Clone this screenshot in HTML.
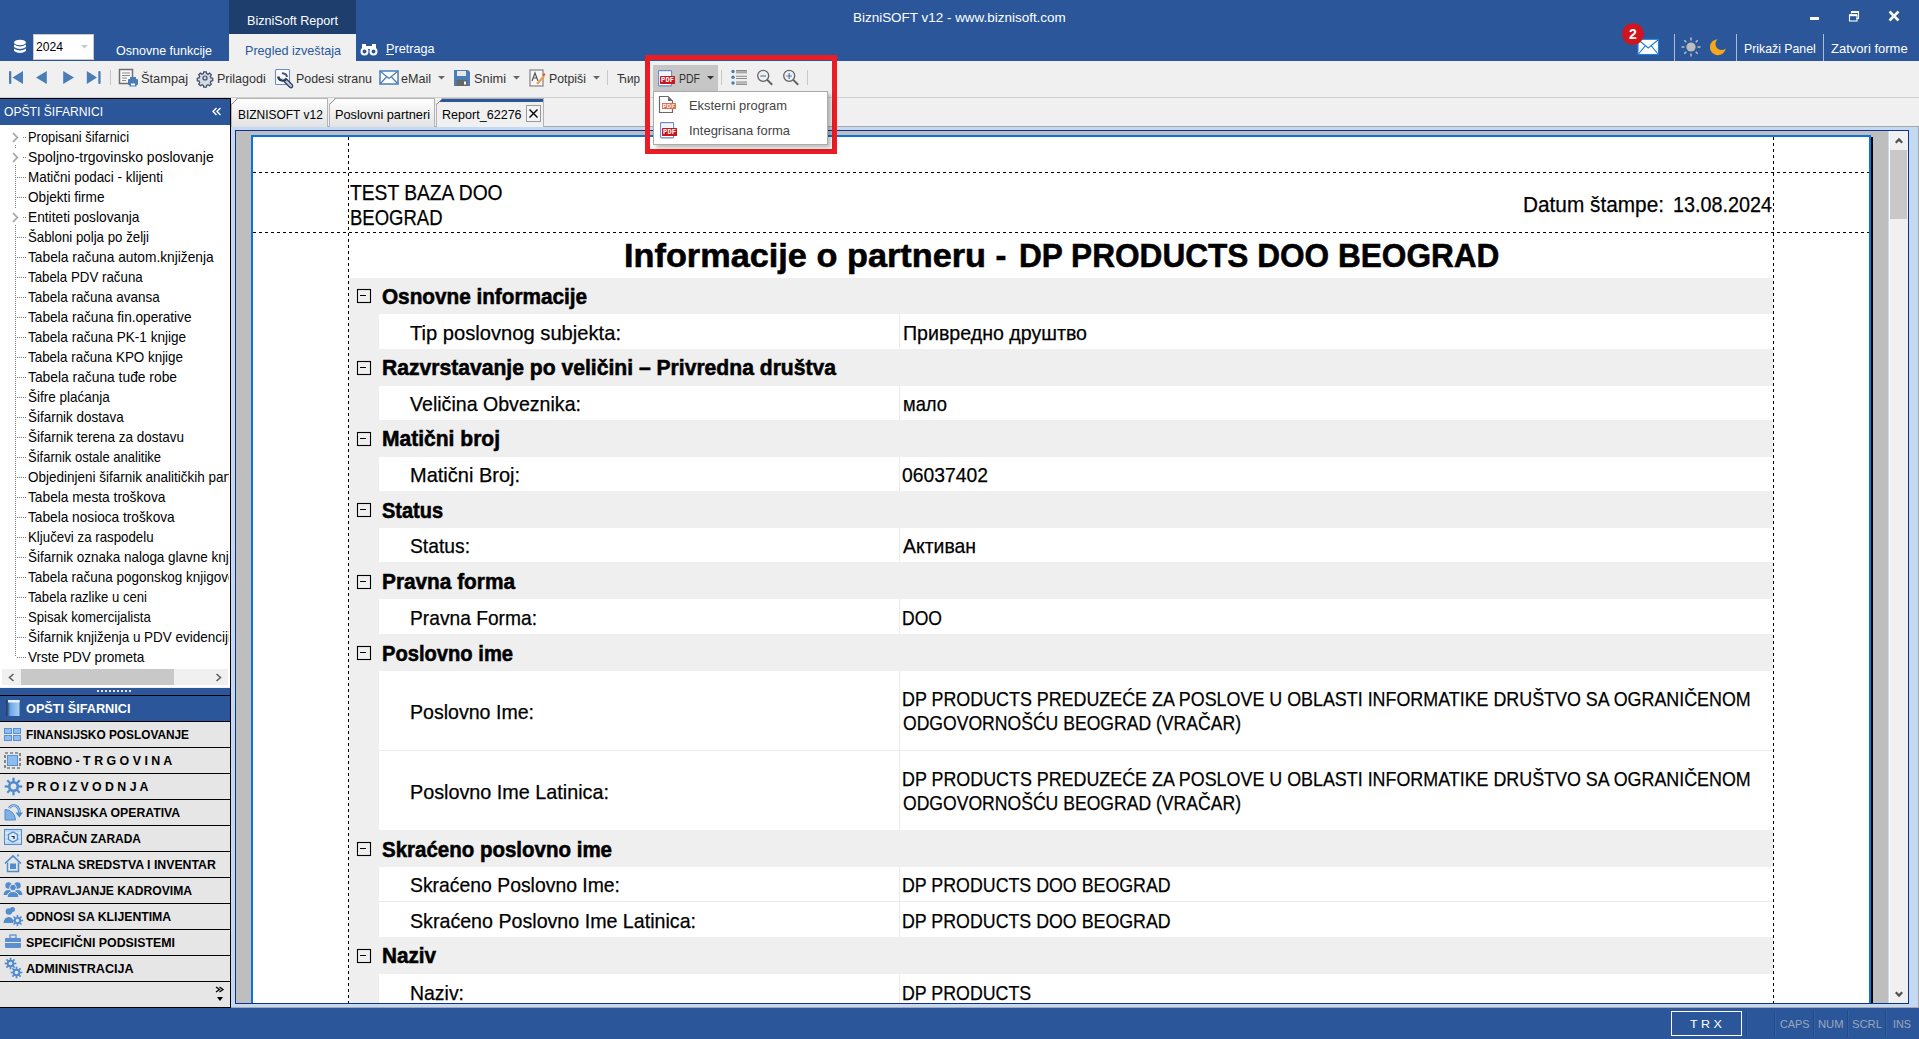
<!DOCTYPE html>
<html><head><meta charset="utf-8"><style>
html,body{margin:0;padding:0;width:1919px;height:1039px;overflow:hidden;background:#F0F0F0;font-family:"Liberation Sans",sans-serif;}
.a{position:absolute;box-sizing:border-box;}
.t{position:absolute;white-space:nowrap;font-family:"Liberation Sans",sans-serif;}
svg.a{overflow:visible}
</style></head><body>
<div class="a" style="left:0px;top:0px;width:1919px;height:61px;background:#2B579A;"></div>
<div class="a" style="left:229px;top:0px;width:127px;height:34px;background:#1E3E6D;"></div>
<div class="a" style="left:229px;top:34px;width:127px;height:27px;background:#F0F0F0;"></div>
<svg class="a" style="left:13px;top:39px;" width="14" height="16" viewBox="0 0 14 16"><g fill="#fff"><ellipse cx="7" cy="3.5" rx="6" ry="2.8"/><path d="M1 5.5 Q7 9.5 13 5.5 V8 Q7 12 1 8Z"/><path d="M1 9.5 Q7 13.5 13 9.5 V12 Q7 16 1 12Z"/></g></svg>
<div class="a" style="left:33px;top:34px;width:61px;height:26px;background:#FFFFFF;border:1px solid #C9C9C9;"></div>
<div class="t" style="left:36.00px;top:41.00px;font-size:12.5px;line-height:12.5px;color:#000;transform:scaleX(0.9710);transform-origin:0 0;">2024</div>
<svg class="a" style="left:81px;top:45px;" width="7" height="4" viewBox="0 0 7 4"><path d="M0 0H7L3.5 3.5Z" fill="#C8C8C8"/></svg>
<div class="t" style="left:115.50px;top:45.00px;font-size:12.7px;line-height:12.7px;color:#FFFFFF;transform:scaleX(0.9864);transform-origin:0 0;">Osnovne funkcije</div>
<div class="t" style="left:247.40px;top:15.00px;font-size:12.7px;line-height:12.7px;color:#FFFFFF;transform:scaleX(0.9926);transform-origin:0 0;">BizniSoft Report</div>
<div class="t" style="left:244.50px;top:45.00px;font-size:12.7px;line-height:12.7px;color:#2B579A;transform:scaleX(0.9936);transform-origin:0 0;">Pregled izveštaja</div>
<svg class="a" style="left:360px;top:43px;" width="18" height="13" viewBox="0 0 18 13"><g fill="#fff"><path d="M2 1h4v5H2z M12 1h4v5h-4z"/><path d="M6 3h6v3H6z"/></g><g fill="none" stroke="#fff" stroke-width="2"><circle cx="4.5" cy="8.5" r="3"/><circle cx="13.5" cy="8.5" r="3"/></g></svg>
<div class="t" style="left:385.50px;top:43.00px;font-size:12.7px;line-height:12.7px;color:#FFFFFF;transform:scaleX(0.9967);transform-origin:0 0;">Pretraga</div>
<div class="a" style="left:386px;top:54px;width:8px;height:1px;background:#FFFFFF;"></div>
<div class="t" style="left:852.50px;top:11.00px;font-size:13.45px;line-height:13.45px;color:#FFFFFF;transform:scaleX(1.0009);transform-origin:0 0;">BizniSOFT v12 - www.biznisoft.com</div>
<div class="a" style="left:1810px;top:17px;width:9px;height:3px;background:#FFFFFF;"></div>
<svg class="a" style="left:1848px;top:10px;" width="12" height="12" viewBox="0 0 12 12"><g fill="none" stroke="#fff"><path d="M3.5 3.5V1.5H10.5V8.5H8.5" stroke-width="1.1"/><rect x="1.5" y="5" width="7.5" height="6" stroke-width="1.1"/><path d="M1.5 5.2H9" stroke-width="2"/><path d="M3.5 2.2H10.5" stroke-width="1.6"/></g></svg>
<svg class="a" style="left:1888px;top:10px;" width="12" height="12" viewBox="0 0 12 12"><path d="M1.5 1.5L10.5 10.5M10.5 1.5L1.5 10.5" stroke="#fff" stroke-width="2.5"/></svg>
<svg class="a" style="left:1637px;top:38px;" width="23" height="18" viewBox="0 0 23 18"><rect x="1" y="1.3" width="20.5" height="15.2" fill="#FFFFFF" stroke="#1E7FD8" stroke-width="1.1"/><path d="M1.5 2L11.2 10L21 2M1.5 16L8.2 7.8M21 16L14.3 7.8" fill="none" stroke="#1E7FD8" stroke-width="1.1"/></svg>
<svg class="a" style="left:1622px;top:23px;" width="22" height="22" viewBox="0 0 22 22"><circle cx="11" cy="11" r="10.8" fill="#D2141E"/><text x="11" y="16" text-anchor="middle" font-family="Liberation Sans" font-weight="bold" font-size="14" fill="#fff">2</text></svg>
<div class="a" style="left:1674px;top:34px;width:1px;height:27px;background:#A9BCD9;"></div>
<div class="a" style="left:1736px;top:34px;width:1px;height:27px;background:#A9BCD9;"></div>
<div class="a" style="left:1823px;top:34px;width:1px;height:27px;background:#A9BCD9;"></div>
<svg class="a" style="left:1681px;top:37px;" width="20" height="20" viewBox="0 0 20 20"><circle cx="10" cy="10" r="4.6" fill="#BDBDBD"/><g stroke="#BDBDBD" stroke-width="1.5"><path d="M10 0.5V3.5M10 16.5V19.5M0.5 10H3.5M16.5 10H19.5M3.3 3.3L5.3 5.3M14.7 14.7L16.7 16.7M3.3 16.7L5.3 14.7M14.7 5.3L16.7 3.3"/></g></svg>
<svg class="a" style="left:1709px;top:38px;" width="18" height="18" viewBox="0 0 18 18"><path d="M8.5 1.2 A8 8 0 1 0 16.8 10.5 A5.8 5.8 0 0 1 8.5 1.2Z" fill="#F5A81C"/></svg>
<div class="t" style="left:1744.00px;top:43.00px;font-size:12.7px;line-height:12.7px;color:#FFFFFF;transform:scaleX(0.9684);transform-origin:0 0;">Prikaži Panel</div>
<div class="t" style="left:1831.00px;top:43.00px;font-size:12.7px;line-height:12.7px;color:#FFFFFF;transform:scaleX(1.0263);transform-origin:0 0;">Zatvori forme</div>
<div class="a" style="left:0px;top:61px;width:1919px;height:37px;background:#F0F0F0;"></div>
<div class="a" style="left:0px;top:97px;width:1919px;height:1px;background:#CFCFCF;"></div>
<svg class="a" style="left:8px;top:70px;" width="16" height="15" viewBox="0 0 16 15"><rect x="1" y="1" width="2.3" height="13" rx="1" fill="#4A7DB5"/><path d="M4.5 7.5L15 1V14Z" fill="#4A7DB5"/></svg>
<svg class="a" style="left:35px;top:70px;" width="13" height="15" viewBox="0 0 13 15"><path d="M1 7.5L11.8 1V14Z" fill="#4A7DB5"/></svg>
<svg class="a" style="left:62px;top:70px;" width="13" height="15" viewBox="0 0 13 15"><path d="M12 7.5L1.2 1V14Z" fill="#4A7DB5"/></svg>
<svg class="a" style="left:86px;top:70px;" width="16" height="15" viewBox="0 0 16 15"><rect x="12.3" y="1" width="2.3" height="13" rx="1" fill="#4A7DB5"/><path d="M11 7.5L0.8 1V14Z" fill="#4A7DB5"/></svg>
<div class="a" style="left:110px;top:70px;width:1px;height:15px;background:#C8C8C8;"></div>
<svg class="a" style="left:118px;top:68px;" width="21" height="20" viewBox="0 0 21 20"><rect x="1.5" y="1.5" width="13" height="14" fill="#F8F8F8" stroke="#707070" stroke-width="1.5"/><path d="M4 5H12M4 7.5H12M4 10H9M4 12.5H8" stroke="#8A8A8A" stroke-width="1.2"/><g fill="#4A7DB5"><rect x="10" y="11" width="10" height="6" rx="1"/><rect x="12" y="9" width="6" height="3"/><rect x="11.5" y="15" width="7" height="3.5"/></g><rect x="13" y="15.5" width="4" height="2" fill="#fff"/></svg>
<div class="t" style="left:140.60px;top:73.00px;font-size:12.7px;line-height:12.7px;color:#333333;transform:scaleX(1.0098);transform-origin:0 0;">Štampaj</div>
<svg class="a" style="left:196px;top:69px;" width="18" height="18" viewBox="0 0 18 18"><g transform="translate(9 9) scale(0.78)"><path d="M-1.6 -8h3.2l.5 2.3 1.8.8 2-1.3 2.2 2.2-1.3 2 .8 1.8 2.3.5v3.2l-2.3.5-.8 1.8 1.3 2-2.2 2.2-2-1.3-1.8.8-.5 2.3h-3.2l-.5-2.3-1.8-.8-2 1.3-2.2-2.2 1.3-2-.8-1.8-2.3-.5v-3.2l2.3-.5.8-1.8-1.3-2 2.2-2.2 2 1.3 1.8-.8z" fill="#D5DCE6" stroke="#3E4C6A" stroke-width="1.6"/><circle r="2.6" fill="none" stroke="#3E4C6A" stroke-width="1.5"/></g></svg>
<div class="t" style="left:216.60px;top:73.00px;font-size:12.7px;line-height:12.7px;color:#333333;transform:scaleX(0.9885);transform-origin:0 0;">Prilagodi</div>
<svg class="a" style="left:272px;top:66px;" width="24" height="24" viewBox="0 0 24 24"><rect x="3.5" y="3.5" width="14" height="15" rx="1" fill="#FAFCFF" stroke="#7389C6" stroke-width="1.1"/><path d="M13.5 14.5L19 20" stroke="#2F3A55" stroke-width="4.6" stroke-linecap="round"/><path d="M13.5 14.5L19 20" stroke="#B9CCEA" stroke-width="2.2" stroke-linecap="round"/><path d="M6.2 10.5 A4.6 4.6 0 0 0 14.6 12.5" fill="none" stroke="#2F3A55" stroke-width="2.3"/><path d="M10 7 L11.5 7.5 A4 4 0 0 1 15 11" fill="none" stroke="#4A5878" stroke-width="2"/><path d="M9 11.5 A2.5 2.5 0 0 0 13 12" fill="none" stroke="#C8D6EE" stroke-width="1.4"/></svg>
<div class="t" style="left:295.70px;top:73.00px;font-size:12.7px;line-height:12.7px;color:#333333;transform:scaleX(0.9796);transform-origin:0 0;">Podesi stranu</div>
<svg class="a" style="left:379px;top:70px;" width="20" height="15" viewBox="0 0 20 15"><rect x="1" y="1" width="18" height="13" fill="#fff" stroke="#4A7DB5" stroke-width="1.5"/><path d="M1 1L10 8.5L19 1M1 14L7.5 7M19 14L12.5 7" fill="none" stroke="#4A7DB5" stroke-width="1.2"/></svg>
<div class="t" style="left:401.00px;top:73.00px;font-size:12.7px;line-height:12.7px;color:#333333;transform:scaleX(0.9895);transform-origin:0 0;">eMail</div>
<svg class="a" style="left:438px;top:76px;" width="7" height="4" viewBox="0 0 7 4"><path d="M0 0H7L3.5 3.5Z" fill="#666"/></svg>
<svg class="a" style="left:453px;top:69px;" width="18" height="18" viewBox="0 0 18 18"><path d="M1 1H15L17 3V17H1Z" fill="#4A7DB5"/><rect x="4" y="2" width="9" height="5" fill="#E8E8E8"/><rect x="3.5" y="11" width="11" height="6" fill="#666"/><rect x="11" y="12.5" width="2" height="3" fill="#fff"/></svg>
<div class="t" style="left:474.00px;top:73.00px;font-size:12.7px;line-height:12.7px;color:#333333;transform:scaleX(1.0087);transform-origin:0 0;">Snimi</div>
<svg class="a" style="left:513px;top:76px;" width="7" height="4" viewBox="0 0 7 4"><path d="M0 0H7L3.5 3.5Z" fill="#666"/></svg>
<svg class="a" style="left:529px;top:69px;" width="17" height="18" viewBox="0 0 17 18"><rect x="1" y="1" width="13" height="16" fill="#F8F8F8" stroke="#8A8A8A" stroke-width="1.3"/><path d="M3 12L6 4L9 12M4.2 9H7.8" fill="none" stroke="#555" stroke-width="1.2"/><path d="M8 15L15 7" stroke="#F0A050" stroke-width="2.2"/><path d="M14 6.5L16 5" stroke="#E05030" stroke-width="2"/></svg>
<div class="t" style="left:549.00px;top:73.00px;font-size:12.7px;line-height:12.7px;color:#333333;transform:scaleX(0.9716);transform-origin:0 0;">Potpiši</div>
<svg class="a" style="left:593px;top:76px;" width="7" height="4" viewBox="0 0 7 4"><path d="M0 0H7L3.5 3.5Z" fill="#666"/></svg>
<div class="a" style="left:607px;top:70px;width:1px;height:15px;background:#C8C8C8;"></div>
<div class="t" style="left:617.00px;top:73.00px;font-size:12.7px;line-height:12.7px;color:#333333;transform:scaleX(0.9208);transform-origin:0 0;">Ћир</div>
<div class="a" style="left:653px;top:65px;width:65px;height:26px;background:#C6C6C6;"></div>
<svg class="a" style="left:658px;top:70px;" width="18" height="17" viewBox="0 0 18 17"><rect x="0.6" y="0.6" width="13" height="15.3" rx="0.8" fill="#FFFFFF" stroke="#6F87C4" stroke-width="1.1"/><rect x="2.2" y="2.5" width="9.5" height="3" fill="#EEF1FA"/><rect x="2" y="6" width="15" height="8" rx="0.5" fill="#C8161E"/><text x="9.6" y="12.4" text-anchor="middle" font-family="Liberation Mono" font-weight="bold" font-size="7" fill="#fff" letter-spacing="0.2">PDF</text></svg>
<div class="t" style="left:679.00px;top:73.00px;font-size:12.7px;line-height:12.7px;color:#333333;transform:scaleX(0.8276);transform-origin:0 0;">PDF</div>
<svg class="a" style="left:707px;top:76px;" width="7" height="4" viewBox="0 0 7 4"><path d="M0 0H7L3.5 3.5Z" fill="#333"/></svg>
<div class="a" style="left:721px;top:70px;width:1px;height:15px;background:#C8C8C8;"></div>
<svg class="a" style="left:730px;top:69px;" width="18" height="17" viewBox="0 0 18 17"><g fill="#4A7DB5"><circle cx="3" cy="2.5" r="1.7"/><circle cx="3" cy="8.3" r="1.7"/><circle cx="3" cy="14" r="1.7"/></g><g stroke="#7A7A7A" stroke-width="0.9"><path d="M6 1.5H17M6 3.8H17M6 7.3H17M6 9.5H17M6 13H17M6 15.4H17"/></g><g stroke="#B0B0B0" stroke-width="1.2"><path d="M6 2.7H17M6 14.2H17"/></g></svg>
<svg class="a" style="left:756px;top:69px;" width="18" height="18" viewBox="0 0 18 18"><circle cx="7.2" cy="6.8" r="5.5" fill="none" stroke="#636363" stroke-width="1.3"/><path d="M11 10.6L16.2 15.8" stroke="#636363" stroke-width="2"/><path d="M4.3 7H10" stroke="#4A7DB5" stroke-width="1.2"/></svg>
<svg class="a" style="left:782px;top:69px;" width="18" height="18" viewBox="0 0 18 18"><circle cx="7.2" cy="6.8" r="5.5" fill="none" stroke="#636363" stroke-width="1.3"/><path d="M11 10.6L16.2 15.8" stroke="#636363" stroke-width="2"/><path d="M4.3 7H10M7.2 4.1V9.9" stroke="#4A7DB5" stroke-width="1.2"/></svg>
<div class="a" style="left:807px;top:70px;width:1px;height:15px;background:#C8C8C8;"></div>
<div class="a" style="left:0px;top:98px;width:231px;height:1px;background:#000000;"></div>
<div class="a" style="left:0px;top:99px;width:230px;height:26px;background:#2B579A;"></div>
<div class="t" style="left:4.40px;top:106.00px;font-size:12.2px;line-height:12.2px;color:#FFFFFF;transform:scaleX(0.9945);transform-origin:0 0;">OPŠTI ŠIFARNICI</div>
<svg class="a" style="left:212px;top:107px;" width="10" height="9" viewBox="0 0 10 9"><path d="M4.5 1L1 4.5L4.5 8M8.5 1L5 4.5L8.5 8" fill="none" stroke="#fff" stroke-width="1.4"/></svg>
<div class="a" style="left:0px;top:125px;width:230px;height:562px;background:#FFFFFF;"></div>
<div class="a" style="left:0px;top:125.00px;width:229px;height:24.2px;overflow:hidden"><div class="t" style="left:28.00px;top:130.00px;font-size:14.2px;line-height:14.2px;color:#000;transform:scaleX(0.9084);transform-origin:0 0;left:28.00px;top:5px">Propisani šifarnici</div></div>
<svg class="a" style="left:11px;top:132px;" width="8" height="11" viewBox="0 0 8 11"><path d="M2 1L6.3 5.5L2 10" fill="none" stroke="#A6A6A6" stroke-width="1.8"/></svg>
<div class="a" style="left:23px;top:137px;width:1px;height:1px;background:#808080;"></div>
<div class="a" style="left:25px;top:137px;width:1px;height:1px;background:#808080;"></div>
<div class="a" style="left:0px;top:145.00px;width:229px;height:24.2px;overflow:hidden"><div class="t" style="left:28.00px;top:150.00px;font-size:14.2px;line-height:14.2px;color:#000;transform:scaleX(0.9852);transform-origin:0 0;left:28.00px;top:5px">Spoljno-trgovinsko poslovanje</div></div>
<svg class="a" style="left:11px;top:152px;" width="8" height="11" viewBox="0 0 8 11"><path d="M2 1L6.3 5.5L2 10" fill="none" stroke="#A6A6A6" stroke-width="1.8"/></svg>
<div class="a" style="left:23px;top:157px;width:1px;height:1px;background:#808080;"></div>
<div class="a" style="left:25px;top:157px;width:1px;height:1px;background:#808080;"></div>
<div class="a" style="left:0px;top:165.00px;width:229px;height:24.2px;overflow:hidden"><div class="t" style="left:28.00px;top:170.00px;font-size:14.2px;line-height:14.2px;color:#000;transform:scaleX(0.9459);transform-origin:0 0;left:28.00px;top:5px">Matični podaci - klijenti</div></div>
<div class="a" style="left:17px;top:177px;width:1px;height:1px;background:#808080;"></div>
<div class="a" style="left:19px;top:177px;width:1px;height:1px;background:#808080;"></div>
<div class="a" style="left:21px;top:177px;width:1px;height:1px;background:#808080;"></div>
<div class="a" style="left:23px;top:177px;width:1px;height:1px;background:#808080;"></div>
<div class="a" style="left:25px;top:177px;width:1px;height:1px;background:#808080;"></div>
<div class="a" style="left:0px;top:185.00px;width:229px;height:24.2px;overflow:hidden"><div class="t" style="left:28.00px;top:190.00px;font-size:14.2px;line-height:14.2px;color:#000;transform:scaleX(0.9608);transform-origin:0 0;left:28.00px;top:5px">Objekti firme</div></div>
<div class="a" style="left:17px;top:197px;width:1px;height:1px;background:#808080;"></div>
<div class="a" style="left:19px;top:197px;width:1px;height:1px;background:#808080;"></div>
<div class="a" style="left:21px;top:197px;width:1px;height:1px;background:#808080;"></div>
<div class="a" style="left:23px;top:197px;width:1px;height:1px;background:#808080;"></div>
<div class="a" style="left:25px;top:197px;width:1px;height:1px;background:#808080;"></div>
<div class="a" style="left:0px;top:205.00px;width:229px;height:24.2px;overflow:hidden"><div class="t" style="left:28.00px;top:210.00px;font-size:14.2px;line-height:14.2px;color:#000;transform:scaleX(0.9683);transform-origin:0 0;left:28.00px;top:5px">Entiteti poslovanja</div></div>
<svg class="a" style="left:11px;top:212px;" width="8" height="11" viewBox="0 0 8 11"><path d="M2 1L6.3 5.5L2 10" fill="none" stroke="#A6A6A6" stroke-width="1.8"/></svg>
<div class="a" style="left:23px;top:217px;width:1px;height:1px;background:#808080;"></div>
<div class="a" style="left:25px;top:217px;width:1px;height:1px;background:#808080;"></div>
<div class="a" style="left:0px;top:225.00px;width:229px;height:24.2px;overflow:hidden"><div class="t" style="left:28.00px;top:230.00px;font-size:14.2px;line-height:14.2px;color:#000;transform:scaleX(0.9354);transform-origin:0 0;left:28.00px;top:5px">Šabloni polja po želji</div></div>
<div class="a" style="left:17px;top:237px;width:1px;height:1px;background:#808080;"></div>
<div class="a" style="left:19px;top:237px;width:1px;height:1px;background:#808080;"></div>
<div class="a" style="left:21px;top:237px;width:1px;height:1px;background:#808080;"></div>
<div class="a" style="left:23px;top:237px;width:1px;height:1px;background:#808080;"></div>
<div class="a" style="left:25px;top:237px;width:1px;height:1px;background:#808080;"></div>
<div class="a" style="left:0px;top:245.00px;width:229px;height:24.2px;overflow:hidden"><div class="t" style="left:28.00px;top:250.00px;font-size:14.2px;line-height:14.2px;color:#000;transform:scaleX(0.9690);transform-origin:0 0;left:28.00px;top:5px">Tabela računa autom.knjiženja</div></div>
<div class="a" style="left:17px;top:257px;width:1px;height:1px;background:#808080;"></div>
<div class="a" style="left:19px;top:257px;width:1px;height:1px;background:#808080;"></div>
<div class="a" style="left:21px;top:257px;width:1px;height:1px;background:#808080;"></div>
<div class="a" style="left:23px;top:257px;width:1px;height:1px;background:#808080;"></div>
<div class="a" style="left:25px;top:257px;width:1px;height:1px;background:#808080;"></div>
<div class="a" style="left:0px;top:265.00px;width:229px;height:24.2px;overflow:hidden"><div class="t" style="left:28.00px;top:270.00px;font-size:14.2px;line-height:14.2px;color:#000;transform:scaleX(0.9383);transform-origin:0 0;left:28.00px;top:5px">Tabela PDV računa</div></div>
<div class="a" style="left:17px;top:277px;width:1px;height:1px;background:#808080;"></div>
<div class="a" style="left:19px;top:277px;width:1px;height:1px;background:#808080;"></div>
<div class="a" style="left:21px;top:277px;width:1px;height:1px;background:#808080;"></div>
<div class="a" style="left:23px;top:277px;width:1px;height:1px;background:#808080;"></div>
<div class="a" style="left:25px;top:277px;width:1px;height:1px;background:#808080;"></div>
<div class="a" style="left:0px;top:285.00px;width:229px;height:24.2px;overflow:hidden"><div class="t" style="left:28.00px;top:290.00px;font-size:14.2px;line-height:14.2px;color:#000;transform:scaleX(0.9487);transform-origin:0 0;left:28.00px;top:5px">Tabela računa avansa</div></div>
<div class="a" style="left:17px;top:297px;width:1px;height:1px;background:#808080;"></div>
<div class="a" style="left:19px;top:297px;width:1px;height:1px;background:#808080;"></div>
<div class="a" style="left:21px;top:297px;width:1px;height:1px;background:#808080;"></div>
<div class="a" style="left:23px;top:297px;width:1px;height:1px;background:#808080;"></div>
<div class="a" style="left:25px;top:297px;width:1px;height:1px;background:#808080;"></div>
<div class="a" style="left:0px;top:305.00px;width:229px;height:24.2px;overflow:hidden"><div class="t" style="left:28.00px;top:310.00px;font-size:14.2px;line-height:14.2px;color:#000;transform:scaleX(0.9597);transform-origin:0 0;left:28.00px;top:5px">Tabela računa fin.operative</div></div>
<div class="a" style="left:17px;top:317px;width:1px;height:1px;background:#808080;"></div>
<div class="a" style="left:19px;top:317px;width:1px;height:1px;background:#808080;"></div>
<div class="a" style="left:21px;top:317px;width:1px;height:1px;background:#808080;"></div>
<div class="a" style="left:23px;top:317px;width:1px;height:1px;background:#808080;"></div>
<div class="a" style="left:25px;top:317px;width:1px;height:1px;background:#808080;"></div>
<div class="a" style="left:0px;top:325.00px;width:229px;height:24.2px;overflow:hidden"><div class="t" style="left:28.00px;top:330.00px;font-size:14.2px;line-height:14.2px;color:#000;transform:scaleX(0.9540);transform-origin:0 0;left:28.00px;top:5px">Tabela računa PK-1 knjige</div></div>
<div class="a" style="left:17px;top:337px;width:1px;height:1px;background:#808080;"></div>
<div class="a" style="left:19px;top:337px;width:1px;height:1px;background:#808080;"></div>
<div class="a" style="left:21px;top:337px;width:1px;height:1px;background:#808080;"></div>
<div class="a" style="left:23px;top:337px;width:1px;height:1px;background:#808080;"></div>
<div class="a" style="left:25px;top:337px;width:1px;height:1px;background:#808080;"></div>
<div class="a" style="left:0px;top:345.00px;width:229px;height:24.2px;overflow:hidden"><div class="t" style="left:28.00px;top:350.00px;font-size:14.2px;line-height:14.2px;color:#000;transform:scaleX(0.9449);transform-origin:0 0;left:28.00px;top:5px">Tabela računa KPO knjige</div></div>
<div class="a" style="left:17px;top:357px;width:1px;height:1px;background:#808080;"></div>
<div class="a" style="left:19px;top:357px;width:1px;height:1px;background:#808080;"></div>
<div class="a" style="left:21px;top:357px;width:1px;height:1px;background:#808080;"></div>
<div class="a" style="left:23px;top:357px;width:1px;height:1px;background:#808080;"></div>
<div class="a" style="left:25px;top:357px;width:1px;height:1px;background:#808080;"></div>
<div class="a" style="left:0px;top:365.00px;width:229px;height:24.2px;overflow:hidden"><div class="t" style="left:28.00px;top:370.00px;font-size:14.2px;line-height:14.2px;color:#000;transform:scaleX(0.9737);transform-origin:0 0;left:28.00px;top:5px">Tabela računa tuđe robe</div></div>
<div class="a" style="left:17px;top:377px;width:1px;height:1px;background:#808080;"></div>
<div class="a" style="left:19px;top:377px;width:1px;height:1px;background:#808080;"></div>
<div class="a" style="left:21px;top:377px;width:1px;height:1px;background:#808080;"></div>
<div class="a" style="left:23px;top:377px;width:1px;height:1px;background:#808080;"></div>
<div class="a" style="left:25px;top:377px;width:1px;height:1px;background:#808080;"></div>
<div class="a" style="left:0px;top:385.00px;width:229px;height:24.2px;overflow:hidden"><div class="t" style="left:28.00px;top:390.00px;font-size:14.2px;line-height:14.2px;color:#000;transform:scaleX(0.95);transform-origin:0 0;left:28.00px;top:5px">Šifre plaćanja</div></div>
<div class="a" style="left:17px;top:397px;width:1px;height:1px;background:#808080;"></div>
<div class="a" style="left:19px;top:397px;width:1px;height:1px;background:#808080;"></div>
<div class="a" style="left:21px;top:397px;width:1px;height:1px;background:#808080;"></div>
<div class="a" style="left:23px;top:397px;width:1px;height:1px;background:#808080;"></div>
<div class="a" style="left:25px;top:397px;width:1px;height:1px;background:#808080;"></div>
<div class="a" style="left:0px;top:405.00px;width:229px;height:24.2px;overflow:hidden"><div class="t" style="left:28.00px;top:410.00px;font-size:14.2px;line-height:14.2px;color:#000;transform:scaleX(0.9471);transform-origin:0 0;left:28.00px;top:5px">Šifarnik dostava</div></div>
<div class="a" style="left:17px;top:417px;width:1px;height:1px;background:#808080;"></div>
<div class="a" style="left:19px;top:417px;width:1px;height:1px;background:#808080;"></div>
<div class="a" style="left:21px;top:417px;width:1px;height:1px;background:#808080;"></div>
<div class="a" style="left:23px;top:417px;width:1px;height:1px;background:#808080;"></div>
<div class="a" style="left:25px;top:417px;width:1px;height:1px;background:#808080;"></div>
<div class="a" style="left:0px;top:425.00px;width:229px;height:24.2px;overflow:hidden"><div class="t" style="left:28.00px;top:430.00px;font-size:14.2px;line-height:14.2px;color:#000;transform:scaleX(0.9510);transform-origin:0 0;left:28.00px;top:5px">Šifarnik terena za dostavu</div></div>
<div class="a" style="left:17px;top:437px;width:1px;height:1px;background:#808080;"></div>
<div class="a" style="left:19px;top:437px;width:1px;height:1px;background:#808080;"></div>
<div class="a" style="left:21px;top:437px;width:1px;height:1px;background:#808080;"></div>
<div class="a" style="left:23px;top:437px;width:1px;height:1px;background:#808080;"></div>
<div class="a" style="left:25px;top:437px;width:1px;height:1px;background:#808080;"></div>
<div class="a" style="left:0px;top:445.00px;width:229px;height:24.2px;overflow:hidden"><div class="t" style="left:28.00px;top:450.00px;font-size:14.2px;line-height:14.2px;color:#000;transform:scaleX(0.9166);transform-origin:0 0;left:28.00px;top:5px">Šifarnik ostale analitike</div></div>
<div class="a" style="left:17px;top:457px;width:1px;height:1px;background:#808080;"></div>
<div class="a" style="left:19px;top:457px;width:1px;height:1px;background:#808080;"></div>
<div class="a" style="left:21px;top:457px;width:1px;height:1px;background:#808080;"></div>
<div class="a" style="left:23px;top:457px;width:1px;height:1px;background:#808080;"></div>
<div class="a" style="left:25px;top:457px;width:1px;height:1px;background:#808080;"></div>
<div class="a" style="left:0px;top:465.00px;width:229px;height:24.2px;overflow:hidden"><div class="t" style="left:28.00px;top:470.00px;font-size:14.2px;line-height:14.2px;color:#000;transform:scaleX(0.95);transform-origin:0 0;left:28.00px;top:5px">Objedinjeni šifarnik analitičkih partnera</div></div>
<div class="a" style="left:17px;top:477px;width:1px;height:1px;background:#808080;"></div>
<div class="a" style="left:19px;top:477px;width:1px;height:1px;background:#808080;"></div>
<div class="a" style="left:21px;top:477px;width:1px;height:1px;background:#808080;"></div>
<div class="a" style="left:23px;top:477px;width:1px;height:1px;background:#808080;"></div>
<div class="a" style="left:25px;top:477px;width:1px;height:1px;background:#808080;"></div>
<div class="a" style="left:0px;top:485.00px;width:229px;height:24.2px;overflow:hidden"><div class="t" style="left:28.00px;top:490.00px;font-size:14.2px;line-height:14.2px;color:#000;transform:scaleX(0.9687);transform-origin:0 0;left:28.00px;top:5px">Tabela mesta troškova</div></div>
<div class="a" style="left:17px;top:497px;width:1px;height:1px;background:#808080;"></div>
<div class="a" style="left:19px;top:497px;width:1px;height:1px;background:#808080;"></div>
<div class="a" style="left:21px;top:497px;width:1px;height:1px;background:#808080;"></div>
<div class="a" style="left:23px;top:497px;width:1px;height:1px;background:#808080;"></div>
<div class="a" style="left:25px;top:497px;width:1px;height:1px;background:#808080;"></div>
<div class="a" style="left:0px;top:505.00px;width:229px;height:24.2px;overflow:hidden"><div class="t" style="left:28.00px;top:510.00px;font-size:14.2px;line-height:14.2px;color:#000;transform:scaleX(0.9638);transform-origin:0 0;left:28.00px;top:5px">Tabela nosioca troškova</div></div>
<div class="a" style="left:17px;top:517px;width:1px;height:1px;background:#808080;"></div>
<div class="a" style="left:19px;top:517px;width:1px;height:1px;background:#808080;"></div>
<div class="a" style="left:21px;top:517px;width:1px;height:1px;background:#808080;"></div>
<div class="a" style="left:23px;top:517px;width:1px;height:1px;background:#808080;"></div>
<div class="a" style="left:25px;top:517px;width:1px;height:1px;background:#808080;"></div>
<div class="a" style="left:0px;top:525.00px;width:229px;height:24.2px;overflow:hidden"><div class="t" style="left:28.00px;top:530.00px;font-size:14.2px;line-height:14.2px;color:#000;transform:scaleX(0.9368);transform-origin:0 0;left:28.00px;top:5px">Ključevi za raspodelu</div></div>
<div class="a" style="left:17px;top:537px;width:1px;height:1px;background:#808080;"></div>
<div class="a" style="left:19px;top:537px;width:1px;height:1px;background:#808080;"></div>
<div class="a" style="left:21px;top:537px;width:1px;height:1px;background:#808080;"></div>
<div class="a" style="left:23px;top:537px;width:1px;height:1px;background:#808080;"></div>
<div class="a" style="left:25px;top:537px;width:1px;height:1px;background:#808080;"></div>
<div class="a" style="left:0px;top:545.00px;width:229px;height:24.2px;overflow:hidden"><div class="t" style="left:28.00px;top:550.00px;font-size:14.2px;line-height:14.2px;color:#000;transform:scaleX(0.95);transform-origin:0 0;left:28.00px;top:5px">Šifarnik oznaka naloga glavne knjige</div></div>
<div class="a" style="left:17px;top:557px;width:1px;height:1px;background:#808080;"></div>
<div class="a" style="left:19px;top:557px;width:1px;height:1px;background:#808080;"></div>
<div class="a" style="left:21px;top:557px;width:1px;height:1px;background:#808080;"></div>
<div class="a" style="left:23px;top:557px;width:1px;height:1px;background:#808080;"></div>
<div class="a" style="left:25px;top:557px;width:1px;height:1px;background:#808080;"></div>
<div class="a" style="left:0px;top:565.00px;width:229px;height:24.2px;overflow:hidden"><div class="t" style="left:28.00px;top:570.00px;font-size:14.2px;line-height:14.2px;color:#000;transform:scaleX(0.95);transform-origin:0 0;left:28.00px;top:5px">Tabela računa pogonskog knjigovodstva</div></div>
<div class="a" style="left:17px;top:577px;width:1px;height:1px;background:#808080;"></div>
<div class="a" style="left:19px;top:577px;width:1px;height:1px;background:#808080;"></div>
<div class="a" style="left:21px;top:577px;width:1px;height:1px;background:#808080;"></div>
<div class="a" style="left:23px;top:577px;width:1px;height:1px;background:#808080;"></div>
<div class="a" style="left:25px;top:577px;width:1px;height:1px;background:#808080;"></div>
<div class="a" style="left:0px;top:585.00px;width:229px;height:24.2px;overflow:hidden"><div class="t" style="left:28.00px;top:590.00px;font-size:14.2px;line-height:14.2px;color:#000;transform:scaleX(0.9257);transform-origin:0 0;left:28.00px;top:5px">Tabela razlike u ceni</div></div>
<div class="a" style="left:17px;top:597px;width:1px;height:1px;background:#808080;"></div>
<div class="a" style="left:19px;top:597px;width:1px;height:1px;background:#808080;"></div>
<div class="a" style="left:21px;top:597px;width:1px;height:1px;background:#808080;"></div>
<div class="a" style="left:23px;top:597px;width:1px;height:1px;background:#808080;"></div>
<div class="a" style="left:25px;top:597px;width:1px;height:1px;background:#808080;"></div>
<div class="a" style="left:0px;top:605.00px;width:229px;height:24.2px;overflow:hidden"><div class="t" style="left:28.00px;top:610.00px;font-size:14.2px;line-height:14.2px;color:#000;transform:scaleX(0.9271);transform-origin:0 0;left:28.00px;top:5px">Spisak komercijalista</div></div>
<div class="a" style="left:17px;top:617px;width:1px;height:1px;background:#808080;"></div>
<div class="a" style="left:19px;top:617px;width:1px;height:1px;background:#808080;"></div>
<div class="a" style="left:21px;top:617px;width:1px;height:1px;background:#808080;"></div>
<div class="a" style="left:23px;top:617px;width:1px;height:1px;background:#808080;"></div>
<div class="a" style="left:25px;top:617px;width:1px;height:1px;background:#808080;"></div>
<div class="a" style="left:0px;top:625.00px;width:229px;height:24.2px;overflow:hidden"><div class="t" style="left:28.00px;top:630.00px;font-size:14.2px;line-height:14.2px;color:#000;transform:scaleX(0.95);transform-origin:0 0;left:28.00px;top:5px">Šifarnik knjiženja u PDV evidenciji</div></div>
<div class="a" style="left:17px;top:637px;width:1px;height:1px;background:#808080;"></div>
<div class="a" style="left:19px;top:637px;width:1px;height:1px;background:#808080;"></div>
<div class="a" style="left:21px;top:637px;width:1px;height:1px;background:#808080;"></div>
<div class="a" style="left:23px;top:637px;width:1px;height:1px;background:#808080;"></div>
<div class="a" style="left:25px;top:637px;width:1px;height:1px;background:#808080;"></div>
<div class="a" style="left:0px;top:645.00px;width:229px;height:24.2px;overflow:hidden"><div class="t" style="left:28.00px;top:650.00px;font-size:14.2px;line-height:14.2px;color:#000;transform:scaleX(0.9565);transform-origin:0 0;left:28.00px;top:5px">Vrste PDV prometa</div></div>
<div class="a" style="left:17px;top:657px;width:1px;height:1px;background:#808080;"></div>
<div class="a" style="left:19px;top:657px;width:1px;height:1px;background:#808080;"></div>
<div class="a" style="left:21px;top:657px;width:1px;height:1px;background:#808080;"></div>
<div class="a" style="left:23px;top:657px;width:1px;height:1px;background:#808080;"></div>
<div class="a" style="left:25px;top:657px;width:1px;height:1px;background:#808080;"></div>
<svg class="a" style="left:15px;top:145px;" width="1" height="512" viewBox="0 0 1 512"><g fill="#808080"><rect x="0" y="0" width="1" height="1"/><rect x="0" y="2" width="1" height="1"/><rect x="0" y="20" width="1" height="1"/><rect x="0" y="22" width="1" height="1"/><rect x="0" y="24" width="1" height="1"/><rect x="0" y="26" width="1" height="1"/><rect x="0" y="28" width="1" height="1"/><rect x="0" y="30" width="1" height="1"/><rect x="0" y="32" width="1" height="1"/><rect x="0" y="34" width="1" height="1"/><rect x="0" y="36" width="1" height="1"/><rect x="0" y="38" width="1" height="1"/><rect x="0" y="40" width="1" height="1"/><rect x="0" y="42" width="1" height="1"/><rect x="0" y="44" width="1" height="1"/><rect x="0" y="46" width="1" height="1"/><rect x="0" y="48" width="1" height="1"/><rect x="0" y="50" width="1" height="1"/><rect x="0" y="52" width="1" height="1"/><rect x="0" y="54" width="1" height="1"/><rect x="0" y="56" width="1" height="1"/><rect x="0" y="58" width="1" height="1"/><rect x="0" y="60" width="1" height="1"/><rect x="0" y="62" width="1" height="1"/><rect x="0" y="80" width="1" height="1"/><rect x="0" y="82" width="1" height="1"/><rect x="0" y="84" width="1" height="1"/><rect x="0" y="86" width="1" height="1"/><rect x="0" y="88" width="1" height="1"/><rect x="0" y="90" width="1" height="1"/><rect x="0" y="92" width="1" height="1"/><rect x="0" y="94" width="1" height="1"/><rect x="0" y="96" width="1" height="1"/><rect x="0" y="98" width="1" height="1"/><rect x="0" y="100" width="1" height="1"/><rect x="0" y="102" width="1" height="1"/><rect x="0" y="104" width="1" height="1"/><rect x="0" y="106" width="1" height="1"/><rect x="0" y="108" width="1" height="1"/><rect x="0" y="110" width="1" height="1"/><rect x="0" y="112" width="1" height="1"/><rect x="0" y="114" width="1" height="1"/><rect x="0" y="116" width="1" height="1"/><rect x="0" y="118" width="1" height="1"/><rect x="0" y="120" width="1" height="1"/><rect x="0" y="122" width="1" height="1"/><rect x="0" y="124" width="1" height="1"/><rect x="0" y="126" width="1" height="1"/><rect x="0" y="128" width="1" height="1"/><rect x="0" y="130" width="1" height="1"/><rect x="0" y="132" width="1" height="1"/><rect x="0" y="134" width="1" height="1"/><rect x="0" y="136" width="1" height="1"/><rect x="0" y="138" width="1" height="1"/><rect x="0" y="140" width="1" height="1"/><rect x="0" y="142" width="1" height="1"/><rect x="0" y="144" width="1" height="1"/><rect x="0" y="146" width="1" height="1"/><rect x="0" y="148" width="1" height="1"/><rect x="0" y="150" width="1" height="1"/><rect x="0" y="152" width="1" height="1"/><rect x="0" y="154" width="1" height="1"/><rect x="0" y="156" width="1" height="1"/><rect x="0" y="158" width="1" height="1"/><rect x="0" y="160" width="1" height="1"/><rect x="0" y="162" width="1" height="1"/><rect x="0" y="164" width="1" height="1"/><rect x="0" y="166" width="1" height="1"/><rect x="0" y="168" width="1" height="1"/><rect x="0" y="170" width="1" height="1"/><rect x="0" y="172" width="1" height="1"/><rect x="0" y="174" width="1" height="1"/><rect x="0" y="176" width="1" height="1"/><rect x="0" y="178" width="1" height="1"/><rect x="0" y="180" width="1" height="1"/><rect x="0" y="182" width="1" height="1"/><rect x="0" y="184" width="1" height="1"/><rect x="0" y="186" width="1" height="1"/><rect x="0" y="188" width="1" height="1"/><rect x="0" y="190" width="1" height="1"/><rect x="0" y="192" width="1" height="1"/><rect x="0" y="194" width="1" height="1"/><rect x="0" y="196" width="1" height="1"/><rect x="0" y="198" width="1" height="1"/><rect x="0" y="200" width="1" height="1"/><rect x="0" y="202" width="1" height="1"/><rect x="0" y="204" width="1" height="1"/><rect x="0" y="206" width="1" height="1"/><rect x="0" y="208" width="1" height="1"/><rect x="0" y="210" width="1" height="1"/><rect x="0" y="212" width="1" height="1"/><rect x="0" y="214" width="1" height="1"/><rect x="0" y="216" width="1" height="1"/><rect x="0" y="218" width="1" height="1"/><rect x="0" y="220" width="1" height="1"/><rect x="0" y="222" width="1" height="1"/><rect x="0" y="224" width="1" height="1"/><rect x="0" y="226" width="1" height="1"/><rect x="0" y="228" width="1" height="1"/><rect x="0" y="230" width="1" height="1"/><rect x="0" y="232" width="1" height="1"/><rect x="0" y="234" width="1" height="1"/><rect x="0" y="236" width="1" height="1"/><rect x="0" y="238" width="1" height="1"/><rect x="0" y="240" width="1" height="1"/><rect x="0" y="242" width="1" height="1"/><rect x="0" y="244" width="1" height="1"/><rect x="0" y="246" width="1" height="1"/><rect x="0" y="248" width="1" height="1"/><rect x="0" y="250" width="1" height="1"/><rect x="0" y="252" width="1" height="1"/><rect x="0" y="254" width="1" height="1"/><rect x="0" y="256" width="1" height="1"/><rect x="0" y="258" width="1" height="1"/><rect x="0" y="260" width="1" height="1"/><rect x="0" y="262" width="1" height="1"/><rect x="0" y="264" width="1" height="1"/><rect x="0" y="266" width="1" height="1"/><rect x="0" y="268" width="1" height="1"/><rect x="0" y="270" width="1" height="1"/><rect x="0" y="272" width="1" height="1"/><rect x="0" y="274" width="1" height="1"/><rect x="0" y="276" width="1" height="1"/><rect x="0" y="278" width="1" height="1"/><rect x="0" y="280" width="1" height="1"/><rect x="0" y="282" width="1" height="1"/><rect x="0" y="284" width="1" height="1"/><rect x="0" y="286" width="1" height="1"/><rect x="0" y="288" width="1" height="1"/><rect x="0" y="290" width="1" height="1"/><rect x="0" y="292" width="1" height="1"/><rect x="0" y="294" width="1" height="1"/><rect x="0" y="296" width="1" height="1"/><rect x="0" y="298" width="1" height="1"/><rect x="0" y="300" width="1" height="1"/><rect x="0" y="302" width="1" height="1"/><rect x="0" y="304" width="1" height="1"/><rect x="0" y="306" width="1" height="1"/><rect x="0" y="308" width="1" height="1"/><rect x="0" y="310" width="1" height="1"/><rect x="0" y="312" width="1" height="1"/><rect x="0" y="314" width="1" height="1"/><rect x="0" y="316" width="1" height="1"/><rect x="0" y="318" width="1" height="1"/><rect x="0" y="320" width="1" height="1"/><rect x="0" y="322" width="1" height="1"/><rect x="0" y="324" width="1" height="1"/><rect x="0" y="326" width="1" height="1"/><rect x="0" y="328" width="1" height="1"/><rect x="0" y="330" width="1" height="1"/><rect x="0" y="332" width="1" height="1"/><rect x="0" y="334" width="1" height="1"/><rect x="0" y="336" width="1" height="1"/><rect x="0" y="338" width="1" height="1"/><rect x="0" y="340" width="1" height="1"/><rect x="0" y="342" width="1" height="1"/><rect x="0" y="344" width="1" height="1"/><rect x="0" y="346" width="1" height="1"/><rect x="0" y="348" width="1" height="1"/><rect x="0" y="350" width="1" height="1"/><rect x="0" y="352" width="1" height="1"/><rect x="0" y="354" width="1" height="1"/><rect x="0" y="356" width="1" height="1"/><rect x="0" y="358" width="1" height="1"/><rect x="0" y="360" width="1" height="1"/><rect x="0" y="362" width="1" height="1"/><rect x="0" y="364" width="1" height="1"/><rect x="0" y="366" width="1" height="1"/><rect x="0" y="368" width="1" height="1"/><rect x="0" y="370" width="1" height="1"/><rect x="0" y="372" width="1" height="1"/><rect x="0" y="374" width="1" height="1"/><rect x="0" y="376" width="1" height="1"/><rect x="0" y="378" width="1" height="1"/><rect x="0" y="380" width="1" height="1"/><rect x="0" y="382" width="1" height="1"/><rect x="0" y="384" width="1" height="1"/><rect x="0" y="386" width="1" height="1"/><rect x="0" y="388" width="1" height="1"/><rect x="0" y="390" width="1" height="1"/><rect x="0" y="392" width="1" height="1"/><rect x="0" y="394" width="1" height="1"/><rect x="0" y="396" width="1" height="1"/><rect x="0" y="398" width="1" height="1"/><rect x="0" y="400" width="1" height="1"/><rect x="0" y="402" width="1" height="1"/><rect x="0" y="404" width="1" height="1"/><rect x="0" y="406" width="1" height="1"/><rect x="0" y="408" width="1" height="1"/><rect x="0" y="410" width="1" height="1"/><rect x="0" y="412" width="1" height="1"/><rect x="0" y="414" width="1" height="1"/><rect x="0" y="416" width="1" height="1"/><rect x="0" y="418" width="1" height="1"/><rect x="0" y="420" width="1" height="1"/><rect x="0" y="422" width="1" height="1"/><rect x="0" y="424" width="1" height="1"/><rect x="0" y="426" width="1" height="1"/><rect x="0" y="428" width="1" height="1"/><rect x="0" y="430" width="1" height="1"/><rect x="0" y="432" width="1" height="1"/><rect x="0" y="434" width="1" height="1"/><rect x="0" y="436" width="1" height="1"/><rect x="0" y="438" width="1" height="1"/><rect x="0" y="440" width="1" height="1"/><rect x="0" y="442" width="1" height="1"/><rect x="0" y="444" width="1" height="1"/><rect x="0" y="446" width="1" height="1"/><rect x="0" y="448" width="1" height="1"/><rect x="0" y="450" width="1" height="1"/><rect x="0" y="452" width="1" height="1"/><rect x="0" y="454" width="1" height="1"/><rect x="0" y="456" width="1" height="1"/><rect x="0" y="458" width="1" height="1"/><rect x="0" y="460" width="1" height="1"/><rect x="0" y="462" width="1" height="1"/><rect x="0" y="464" width="1" height="1"/><rect x="0" y="466" width="1" height="1"/><rect x="0" y="468" width="1" height="1"/><rect x="0" y="470" width="1" height="1"/><rect x="0" y="472" width="1" height="1"/><rect x="0" y="474" width="1" height="1"/><rect x="0" y="476" width="1" height="1"/><rect x="0" y="478" width="1" height="1"/><rect x="0" y="480" width="1" height="1"/><rect x="0" y="482" width="1" height="1"/><rect x="0" y="484" width="1" height="1"/><rect x="0" y="486" width="1" height="1"/><rect x="0" y="488" width="1" height="1"/><rect x="0" y="490" width="1" height="1"/><rect x="0" y="492" width="1" height="1"/><rect x="0" y="494" width="1" height="1"/><rect x="0" y="496" width="1" height="1"/><rect x="0" y="498" width="1" height="1"/><rect x="0" y="500" width="1" height="1"/><rect x="0" y="502" width="1" height="1"/><rect x="0" y="504" width="1" height="1"/><rect x="0" y="506" width="1" height="1"/><rect x="0" y="508" width="1" height="1"/><rect x="0" y="510" width="1" height="1"/></g></svg>
<div class="a" style="left:2px;top:669px;width:226px;height:16px;background:#F0F0F0;"></div>
<div class="a" style="left:21px;top:669px;width:153px;height:16px;background:#C8C8C8;"></div>
<svg class="a" style="left:8px;top:673px;" width="7" height="9" viewBox="0 0 7 9"><path d="M5.5 1L1.5 4.5L5.5 8" fill="none" stroke="#606060" stroke-width="1.6"/></svg>
<svg class="a" style="left:215px;top:673px;" width="7" height="9" viewBox="0 0 7 9"><path d="M1.5 1L5.5 4.5L1.5 8" fill="none" stroke="#606060" stroke-width="1.6"/></svg>
<div class="a" style="left:0px;top:688px;width:230px;height:7px;background:#2B579A;"></div>
<svg class="a" style="left:97px;top:690px;" width="36" height="2" viewBox="0 0 36 2"><g fill="#E0E8F4"><rect x="0" y="0" width="2" height="2"/><rect x="4" y="0" width="2" height="2"/><rect x="8" y="0" width="2" height="2"/><rect x="12" y="0" width="2" height="2"/><rect x="16" y="0" width="2" height="2"/><rect x="20" y="0" width="2" height="2"/><rect x="24" y="0" width="2" height="2"/><rect x="28" y="0" width="2" height="2"/><rect x="32" y="0" width="2" height="2"/></g></svg>
<div class="a" style="left:0px;top:695px;width:230px;height:1px;background:#000;"></div>
<div class="a" style="left:0px;top:696px;width:230px;height:25px;background:#2B579A;"></div>
<div class="t" style="left:26.00px;top:703.00px;font-size:12.5px;line-height:12.5px;color:#FFFFFF;font-weight:bold;transform:scaleX(1.0166);transform-origin:0 0;">OPŠTI ŠIFARNICI</div>
<div class="a" style="left:0px;top:721px;width:230px;height:1px;background:#000;"></div>
<div class="a" style="left:0px;top:722px;width:230px;height:25px;background:#E6E6E6;"></div>
<div class="t" style="left:26.00px;top:729.00px;font-size:12.5px;line-height:12.5px;color:#000;font-weight:bold;transform:scaleX(0.9476);transform-origin:0 0;">FINANSIJSKO POSLOVANJE</div>
<div class="a" style="left:0px;top:747px;width:230px;height:1px;background:#000;"></div>
<div class="a" style="left:0px;top:748px;width:230px;height:25px;background:#E6E6E6;"></div>
<div class="t" style="left:26.00px;top:755.00px;font-size:12.5px;line-height:12.5px;color:#000;font-weight:bold;transform:scaleX(0.9911);transform-origin:0 0;">ROBNO - T R G O V I N A</div>
<div class="a" style="left:0px;top:773px;width:230px;height:1px;background:#000;"></div>
<div class="a" style="left:0px;top:774px;width:230px;height:25px;background:#E6E6E6;"></div>
<div class="t" style="left:26.00px;top:781.00px;font-size:12.5px;line-height:12.5px;color:#000;font-weight:bold;transform:scaleX(0.9839);transform-origin:0 0;">P R O I Z V O D N J A</div>
<div class="a" style="left:0px;top:799px;width:230px;height:1px;background:#000;"></div>
<div class="a" style="left:0px;top:800px;width:230px;height:25px;background:#E6E6E6;"></div>
<div class="t" style="left:26.00px;top:807.00px;font-size:12.5px;line-height:12.5px;color:#000;font-weight:bold;transform:scaleX(0.9792);transform-origin:0 0;">FINANSIJSKA OPERATIVA</div>
<div class="a" style="left:0px;top:825px;width:230px;height:1px;background:#000;"></div>
<div class="a" style="left:0px;top:826px;width:230px;height:25px;background:#E6E6E6;"></div>
<div class="t" style="left:26.00px;top:833.00px;font-size:12.5px;line-height:12.5px;color:#000;font-weight:bold;transform:scaleX(0.9573);transform-origin:0 0;">OBRAČUN ZARADA</div>
<div class="a" style="left:0px;top:851px;width:230px;height:1px;background:#000;"></div>
<div class="a" style="left:0px;top:852px;width:230px;height:25px;background:#E6E6E6;"></div>
<div class="t" style="left:26.00px;top:859.00px;font-size:12.5px;line-height:12.5px;color:#000;font-weight:bold;transform:scaleX(0.9847);transform-origin:0 0;">STALNA SREDSTVA I INVENTAR</div>
<div class="a" style="left:0px;top:877px;width:230px;height:1px;background:#000;"></div>
<div class="a" style="left:0px;top:878px;width:230px;height:25px;background:#E6E6E6;"></div>
<div class="t" style="left:26.00px;top:885.00px;font-size:12.5px;line-height:12.5px;color:#000;font-weight:bold;transform:scaleX(0.9690);transform-origin:0 0;">UPRAVLJANJE KADROVIMA</div>
<div class="a" style="left:0px;top:903px;width:230px;height:1px;background:#000;"></div>
<div class="a" style="left:0px;top:904px;width:230px;height:25px;background:#E6E6E6;"></div>
<div class="t" style="left:26.00px;top:911.00px;font-size:12.5px;line-height:12.5px;color:#000;font-weight:bold;transform:scaleX(0.9797);transform-origin:0 0;">ODNOSI SA KLIJENTIMA</div>
<div class="a" style="left:0px;top:929px;width:230px;height:1px;background:#000;"></div>
<div class="a" style="left:0px;top:930px;width:230px;height:25px;background:#E6E6E6;"></div>
<div class="t" style="left:26.00px;top:937.00px;font-size:12.5px;line-height:12.5px;color:#000;font-weight:bold;transform:scaleX(0.9886);transform-origin:0 0;">SPECIFIČNI PODSISTEMI</div>
<div class="a" style="left:0px;top:955px;width:230px;height:1px;background:#000;"></div>
<div class="a" style="left:0px;top:956px;width:230px;height:25px;background:#E6E6E6;"></div>
<div class="t" style="left:26.00px;top:963.00px;font-size:12.5px;line-height:12.5px;color:#000;font-weight:bold;transform:scaleX(1.0061);transform-origin:0 0;">ADMINISTRACIJA</div>
<div class="a" style="left:0px;top:981px;width:230px;height:1px;background:#000;"></div>
<div class="a" style="left:0px;top:982px;width:230px;height:25px;background:#E6E6E6;"></div>
<div class="a" style="left:0px;top:1007px;width:231px;height:1px;background:#000;"></div>
<svg class="a" style="left:215px;top:986px;" width="9" height="16" viewBox="0 0 9 16"><path d="M1 1L4.5 3.5L1 6M4.5 1L8 3.5L4.5 6" fill="none" stroke="#000" stroke-width="1.3"/><path d="M2 11H8L5 15Z" fill="#000"/></svg>
<svg class="a" style="left:5px;top:699px;" width="16" height="18" viewBox="0 0 16 18"><defs><linearGradient id="bk" x1="0" x2="1"><stop offset="0" stop-color="#1B2F50"/><stop offset="0.3" stop-color="#6FA8E6"/><stop offset="1" stop-color="#A9D0F5"/></linearGradient></defs><rect x="1.5" y="1" width="13" height="16" fill="url(#bk)"/><rect x="3" y="1" width="11.5" height="2.5" fill="#E8F2FC"/></svg>
<svg class="a" style="left:4px;top:728px;" width="18" height="13" viewBox="0 0 18 13"><g fill="#8DBDF0" stroke="#5B8FD0" stroke-width="1"><rect x="0.5" y="0.5" width="7" height="5"/><rect x="9.5" y="0.5" width="7" height="5"/><rect x="0.5" y="7.5" width="7" height="5"/><rect x="9.5" y="7.5" width="7" height="5"/></g></svg>
<svg class="a" style="left:4px;top:752px;" width="17" height="17" viewBox="0 0 17 17"><rect x="1" y="1" width="15" height="15" fill="none" stroke="#444" stroke-width="1.2" stroke-dasharray="3 2"/><rect x="3.5" y="3.5" width="10" height="10" fill="#8DBDF0" stroke="#5B8FD0"/></svg>
<svg class="a" style="left:3.5px;top:776.5px;" width="19" height="19" viewBox="0 0 19 19"><g fill="#4F8CD0"><rect x="8.35" y="0.70" width="2.3" height="17.60" transform="rotate(0 9.5 9.5)"/><rect x="8.35" y="0.70" width="2.3" height="17.60" transform="rotate(45 9.5 9.5)"/><rect x="8.35" y="0.70" width="2.3" height="17.60" transform="rotate(90 9.5 9.5)"/><rect x="8.35" y="0.70" width="2.3" height="17.60" transform="rotate(135 9.5 9.5)"/><circle cx="9.5" cy="9.5" r="5.6"/></g><circle cx="9.5" cy="9.5" r="2.9" fill="#E6E6E6"/></svg>
<svg class="a" style="left:4px;top:803px;" width="19" height="18" viewBox="0 0 19 18"><path d="M1 6.5 A10.5 10.5 0 0 1 11.5 17 H1Z" fill="#7FB0E6" stroke="#4F8CD0" stroke-width="1"/><path d="M5 5 Q9 0 13.5 4 Q15.5 6 15.5 10" fill="none" stroke="#4F8CD0" stroke-width="2.6"/><path d="M5 5 Q9 0 13.5 4 Q15.5 6 15.5 10" fill="none" stroke="#A9D0F5" stroke-width="1"/><path d="M11.5 9.5H19L15.3 14.5Z" fill="#4F8CD0"/></svg>
<svg class="a" style="left:4px;top:829px;" width="18" height="17" viewBox="0 0 18 17"><rect x="0.5" y="0.5" width="17" height="15" fill="#BFD8F2" stroke="#4F8CD0"/><path d="M1 4H17M1 8H17M1 12H17" stroke="#F4F8FE" stroke-width="1.2"/><path d="M9 3L13.5 5.5V10.5L9 13L4.5 10.5V5.5Z" fill="#DDEBFA" stroke="#4F8CD0" stroke-width="1.3"/><path d="M7.5 7.5H10V10" fill="none" stroke="#223" stroke-width="1.2"/></svg>
<svg class="a" style="left:3px;top:853px;" width="20" height="20" viewBox="0 0 20 20"><path d="M15 3.5V1.5M2 10.5L10 3L18 10.5" fill="none" stroke="#4F8CD0" stroke-width="1.7"/><path d="M4.5 9.5V18.5H15.5V9.5" fill="none" stroke="#4F8CD0" stroke-width="1.5"/><rect x="7" y="10.5" width="6" height="5.5" fill="#4F8CD0"/></svg>
<svg class="a" style="left:3px;top:881px;" width="20" height="17" viewBox="0 0 20 17"><g fill="#4F8CD0"><circle cx="5.5" cy="4.5" r="3.2"/><circle cx="14.5" cy="4.5" r="3.2"/><path d="M0.5 14 Q1 9 5.5 9 Q9 9 9.5 14Z M10.5 14 Q11 9 14.5 9 Q19 9 19.5 14Z"/></g><circle cx="10" cy="6.5" r="3.3" fill="#4F8CD0" stroke="#E6E6E6" stroke-width="1"/><path d="M4 16.5 Q4.5 10.5 10 10.5 Q15.5 10.5 16 16.5Z" fill="#4F8CD0" stroke="#E6E6E6" stroke-width="1"/></svg>
<svg class="a" style="left:3px;top:906px;" width="12" height="18" viewBox="0 0 12 18"><circle cx="6" cy="5.5" r="3.3" fill="#4F8CD0"/><path d="M0.5 17 Q1 11 6 11 Q10 11 10.5 17Z" fill="#4F8CD0"/><circle cx="9.5" cy="3.5" r="2.5" fill="#4F8CD0"/></svg>
<svg class="a" style="left:10.5px;top:913.5px;" width="13" height="13" viewBox="0 0 13 13"><g fill="#4F8CD0"><rect x="5.70" y="0.90" width="1.6" height="11.20" transform="rotate(0 6.5 6.5)"/><rect x="5.70" y="0.90" width="1.6" height="11.20" transform="rotate(45 6.5 6.5)"/><rect x="5.70" y="0.90" width="1.6" height="11.20" transform="rotate(90 6.5 6.5)"/><rect x="5.70" y="0.90" width="1.6" height="11.20" transform="rotate(135 6.5 6.5)"/><circle cx="6.5" cy="6.5" r="3.6"/></g><circle cx="6.5" cy="6.5" r="1.7" fill="#E6E6E6"/></svg>
<svg class="a" style="left:4px;top:934px;" width="18" height="15" viewBox="0 0 18 15"><rect x="1" y="4" width="16" height="10" rx="1" fill="#5B8FD0"/><rect x="6" y="1" width="6" height="3.5" fill="none" stroke="#5B8FD0" stroke-width="1.3"/><path d="M1 8.5H17" stroke="#E6E6E6"/></svg>
<svg class="a" style="left:3.5px;top:957.0px;" width="13" height="13" viewBox="0 0 13 13"><g fill="#4F8CD0"><rect x="5.65" y="0.70" width="1.7" height="11.60" transform="rotate(0 6.5 6.5)"/><rect x="5.65" y="0.70" width="1.7" height="11.60" transform="rotate(45 6.5 6.5)"/><rect x="5.65" y="0.70" width="1.7" height="11.60" transform="rotate(90 6.5 6.5)"/><rect x="5.65" y="0.70" width="1.7" height="11.60" transform="rotate(135 6.5 6.5)"/><circle cx="6.5" cy="6.5" r="3.8"/></g><circle cx="6.5" cy="6.5" r="1.8" fill="#E6E6E6"/></svg>
<svg class="a" style="left:10.0px;top:965.5px;" width="13" height="13" viewBox="0 0 13 13"><g fill="#4F8CD0"><rect x="5.65" y="0.70" width="1.7" height="11.60" transform="rotate(0 6.5 6.5)"/><rect x="5.65" y="0.70" width="1.7" height="11.60" transform="rotate(45 6.5 6.5)"/><rect x="5.65" y="0.70" width="1.7" height="11.60" transform="rotate(90 6.5 6.5)"/><rect x="5.65" y="0.70" width="1.7" height="11.60" transform="rotate(135 6.5 6.5)"/><circle cx="6.5" cy="6.5" r="3.8"/></g><circle cx="6.5" cy="6.5" r="1.8" fill="#E6E6E6"/></svg>
<div class="a" style="left:230px;top:98px;width:1px;height:910px;background:#000000;"></div>
<div class="a" style="left:231px;top:98px;width:1688px;height:29px;background:#F0F0F0;"></div>
<div class="a" style="left:231px;top:126px;width:1688px;height:1px;background:#A6A6A6;"></div>
<div class="a" style="left:231px;top:98px;width:97px;height:29px;background:linear-gradient(#FFFFFF,#E2E2E2);border:1px solid #B4B4B4;border-bottom:none;clip-path:polygon(6px 0,100% 0,100% 100%,0 100%,0 6px)"></div>
<svg class="a" style="left:231px;top:98px;" width="7" height="7" viewBox="0 0 7 7"><path d="M0.5 6.5L6.5 0.5" stroke="#8C8C8C" stroke-width="1"/></svg>
<div class="t" style="left:237.70px;top:109.00px;font-size:12.8px;line-height:12.8px;color:#000;transform:scaleX(0.9339);transform-origin:0 0;">BIZNISOFT v12</div>
<div class="a" style="left:329px;top:98px;width:106px;height:29px;background:linear-gradient(#FFFFFF,#E2E2E2);border:1px solid #B4B4B4;border-bottom:none;clip-path:polygon(6px 0,100% 0,100% 100%,0 100%,0 6px)"></div>
<svg class="a" style="left:329px;top:98px;" width="7" height="7" viewBox="0 0 7 7"><path d="M0.5 6.5L6.5 0.5" stroke="#8C8C8C" stroke-width="1"/></svg>
<div class="t" style="left:335.00px;top:109.00px;font-size:12.8px;line-height:12.8px;color:#000;transform:scaleX(0.9967);transform-origin:0 0;">Poslovni partneri</div>
<div class="a" style="left:436px;top:98px;width:108px;height:29px;background:#F0F0F0;border:1px solid #B4B4B4;border-bottom:none;clip-path:polygon(6px 0,100% 0,100% 100%,0 100%,0 6px)"></div>
<div class="a" style="left:438px;top:99px;width:105px;height:3px;background:#2B579A;clip-path:polygon(4px 0,100% 0,100% 100%,1px 100%)"></div>
<svg class="a" style="left:436px;top:98px;" width="7" height="7" viewBox="0 0 7 7"><path d="M0.5 6.5L6.5 0.5" stroke="#8C8C8C" stroke-width="1"/></svg>
<div class="t" style="left:442.00px;top:109.00px;font-size:12.8px;line-height:12.8px;color:#000;transform:scaleX(0.9814);transform-origin:0 0;">Report_62276</div>
<div class="a" style="left:526px;top:105px;width:15px;height:17px;border:1px solid #9A9A9A;background:#F4F4F4"></div>
<svg class="a" style="left:528px;top:107px;" width="11" height="13" viewBox="0 0 11 13"><path d="M1.5 2.5L9.5 10.5M9.5 2.5L1.5 10.5" stroke="#000" stroke-width="1.4"/></svg>
<div class="a" style="left:231px;top:127px;width:1688px;height:881px;background:#C4D9F4;"></div>
<div class="a" style="left:231px;top:1007px;width:1688px;height:1px;background:#A8A8A8;"></div>
<div class="a" style="left:1918px;top:127px;width:1px;height:880px;background:#A8A8A8;"></div>
<div class="a" style="left:235px;top:130px;width:1674px;height:874px;border:1px solid #10308C;"></div>
<div class="a" style="left:236px;top:131px;width:1652px;height:872px;background:#BEBEBE;"></div>
<div class="a" style="left:251px;top:135px;width:1620px;height:868px;background:#0A74DA;"></div>
<div class="a" style="left:1871px;top:137px;width:2px;height:866px;background:#000;"></div>
<div class="a" style="left:253px;top:137px;width:1616px;height:866px;background:#FFFFFF;"></div>
<div class="a" style="left:1889px;top:131px;width:1px;height:872px;background:#FFFFFF;"></div>
<div class="a" style="left:1890px;top:131px;width:18px;height:872px;background:#F0F0F0;"></div>
<div class="a" style="left:1890px;top:150px;width:17px;height:69px;background:#C8C8C8;"></div>
<svg class="a" style="left:1894px;top:137px;" width="10" height="7" viewBox="0 0 10 7"><path d="M1.8 5.8L5 2.4L8.2 5.8" fill="none" stroke="#505050" stroke-width="2.2"/></svg>
<svg class="a" style="left:1894px;top:990px;" width="10" height="8" viewBox="0 0 10 8"><path d="M1.8 2.2L5 5.6L8.2 2.2" fill="none" stroke="#505050" stroke-width="2.2"/></svg>
<div class="a" style="left:253px;top:137px;width:1616px;height:866px;overflow:hidden">
<div class="a" style="left:96px;top:141px;width:1424px;height:725px;background:#EFEFEF;"></div>
<svg class="a" style="left:103px;top:151px;" width="16" height="16" viewBox="0 0 16 16"><rect x="1.5" y="1.5" width="13" height="13" fill="none" stroke="#000" stroke-width="1.1"/><path d="M4 7.5H10" stroke="#000" stroke-width="1"/></svg>
<div class="t" style="left:129.00px;top:149.00px;font-size:21.2px;line-height:21.2px;color:#000;font-weight:bold;transform:scaleX(0.9782);transform-origin:0 0;-webkit-text-stroke:0.55px #000;">Osnovne informacije</div>
<svg class="a" style="left:103px;top:223px;" width="16" height="16" viewBox="0 0 16 16"><rect x="1.5" y="1.5" width="13" height="13" fill="none" stroke="#000" stroke-width="1.1"/><path d="M4 7.5H10" stroke="#000" stroke-width="1"/></svg>
<div class="t" style="left:129.00px;top:220.00px;font-size:21.2px;line-height:21.2px;color:#000;font-weight:bold;transform:scaleX(0.9962);transform-origin:0 0;-webkit-text-stroke:0.55px #000;">Razvrstavanje po veličini – Privredna društva</div>
<svg class="a" style="left:103px;top:294px;" width="16" height="16" viewBox="0 0 16 16"><rect x="1.5" y="1.5" width="13" height="13" fill="none" stroke="#000" stroke-width="1.1"/><path d="M4 7.5H10" stroke="#000" stroke-width="1"/></svg>
<div class="t" style="left:129.00px;top:291.00px;font-size:21.2px;line-height:21.2px;color:#000;font-weight:bold;transform:scaleX(0.9925);transform-origin:0 0;-webkit-text-stroke:0.55px #000;">Matični broj</div>
<svg class="a" style="left:103px;top:365px;" width="16" height="16" viewBox="0 0 16 16"><rect x="1.5" y="1.5" width="13" height="13" fill="none" stroke="#000" stroke-width="1.1"/><path d="M4 7.5H10" stroke="#000" stroke-width="1"/></svg>
<div class="t" style="left:129.00px;top:363.00px;font-size:21.2px;line-height:21.2px;color:#000;font-weight:bold;transform:scaleX(0.9421);transform-origin:0 0;-webkit-text-stroke:0.55px #000;">Status</div>
<svg class="a" style="left:103px;top:437px;" width="16" height="16" viewBox="0 0 16 16"><rect x="1.5" y="1.5" width="13" height="13" fill="none" stroke="#000" stroke-width="1.1"/><path d="M4 7.5H10" stroke="#000" stroke-width="1"/></svg>
<div class="t" style="left:129.00px;top:434.00px;font-size:21.2px;line-height:21.2px;color:#000;font-weight:bold;transform:scaleX(0.9821);transform-origin:0 0;-webkit-text-stroke:0.55px #000;">Pravna forma</div>
<svg class="a" style="left:103px;top:508px;" width="16" height="16" viewBox="0 0 16 16"><rect x="1.5" y="1.5" width="13" height="13" fill="none" stroke="#000" stroke-width="1.1"/><path d="M4 7.5H10" stroke="#000" stroke-width="1"/></svg>
<div class="t" style="left:129.00px;top:506.00px;font-size:21.2px;line-height:21.2px;color:#000;font-weight:bold;transform:scaleX(0.9510);transform-origin:0 0;-webkit-text-stroke:0.55px #000;">Poslovno ime</div>
<svg class="a" style="left:103px;top:704px;" width="16" height="16" viewBox="0 0 16 16"><rect x="1.5" y="1.5" width="13" height="13" fill="none" stroke="#000" stroke-width="1.1"/><path d="M4 7.5H10" stroke="#000" stroke-width="1"/></svg>
<div class="t" style="left:129.00px;top:702.00px;font-size:21.2px;line-height:21.2px;color:#000;font-weight:bold;transform:scaleX(0.9670);transform-origin:0 0;-webkit-text-stroke:0.55px #000;">Skraćeno poslovno ime</div>
<svg class="a" style="left:103px;top:811px;" width="16" height="16" viewBox="0 0 16 16"><rect x="1.5" y="1.5" width="13" height="13" fill="none" stroke="#000" stroke-width="1.1"/><path d="M4 7.5H10" stroke="#000" stroke-width="1"/></svg>
<div class="t" style="left:129.00px;top:808.00px;font-size:21.2px;line-height:21.2px;color:#000;font-weight:bold;transform:scaleX(0.9756);transform-origin:0 0;-webkit-text-stroke:0.55px #000;">Naziv</div>
<div class="a" style="left:126px;top:177px;width:1394px;height:35px;background:#FFFFFF;"></div>
<div class="a" style="left:646px;top:177px;width:1px;height:35px;background:#EBEBEB;"></div>
<div class="t" style="left:157.00px;top:185.00px;font-size:21px;line-height:21px;color:#000;transform:scaleX(0.9597);transform-origin:0 0;-webkit-text-stroke:0.25px #000;">Tip poslovnog subjekta:</div>
<div class="t" style="left:650.00px;top:185.00px;font-size:21px;line-height:21px;color:#000;transform:scaleX(0.9331);transform-origin:0 0;-webkit-text-stroke:0.25px #000;">Привредно друштво</div>
<div class="a" style="left:126px;top:249px;width:1394px;height:34px;background:#FFFFFF;"></div>
<div class="a" style="left:646px;top:249px;width:1px;height:34px;background:#EBEBEB;"></div>
<div class="t" style="left:157.00px;top:256.00px;font-size:21px;line-height:21px;color:#000;transform:scaleX(0.9331);transform-origin:0 0;-webkit-text-stroke:0.25px #000;">Veličina Obveznika:</div>
<div class="t" style="left:650.00px;top:256.00px;font-size:21px;line-height:21px;color:#000;transform:scaleX(0.8750);transform-origin:0 0;-webkit-text-stroke:0.25px #000;">мало</div>
<div class="a" style="left:126px;top:320px;width:1394px;height:34px;background:#FFFFFF;"></div>
<div class="a" style="left:646px;top:320px;width:1px;height:34px;background:#EBEBEB;"></div>
<div class="t" style="left:157.00px;top:327.00px;font-size:21px;line-height:21px;color:#000;transform:scaleX(0.9521);transform-origin:0 0;-webkit-text-stroke:0.25px #000;">Matični Broj:</div>
<div class="t" style="left:649.30px;top:327.00px;font-size:21px;line-height:21px;color:#000;transform:scaleX(0.9204);transform-origin:0 0;-webkit-text-stroke:0.25px #000;">06037402</div>
<div class="a" style="left:126px;top:391px;width:1394px;height:34px;background:#FFFFFF;"></div>
<div class="a" style="left:646px;top:391px;width:1px;height:34px;background:#EBEBEB;"></div>
<div class="t" style="left:157.00px;top:398.00px;font-size:21px;line-height:21px;color:#000;transform:scaleX(0.9179);transform-origin:0 0;-webkit-text-stroke:0.25px #000;">Status:</div>
<div class="t" style="left:650.00px;top:398.00px;font-size:21px;line-height:21px;color:#000;transform:scaleX(0.9243);transform-origin:0 0;-webkit-text-stroke:0.25px #000;">Активан</div>
<div class="a" style="left:126px;top:462px;width:1394px;height:35px;background:#FFFFFF;"></div>
<div class="a" style="left:646px;top:462px;width:1px;height:35px;background:#EBEBEB;"></div>
<div class="t" style="left:157.00px;top:470.00px;font-size:21px;line-height:21px;color:#000;transform:scaleX(0.9145);transform-origin:0 0;-webkit-text-stroke:0.25px #000;">Pravna Forma:</div>
<div class="t" style="left:649.30px;top:470.00px;font-size:21px;line-height:21px;color:#000;transform:scaleX(0.8362);transform-origin:0 0;-webkit-text-stroke:0.25px #000;">DOO</div>
<div class="a" style="left:126px;top:534px;width:1394px;height:79px;background:#FFFFFF;"></div>
<div class="a" style="left:646px;top:534px;width:1px;height:79px;background:#EBEBEB;"></div>
<div class="t" style="left:157.00px;top:564.00px;font-size:21px;line-height:21px;color:#000;transform:scaleX(0.9319);transform-origin:0 0;-webkit-text-stroke:0.25px #000;">Poslovno Ime:</div>
<div class="t" style="left:649.00px;top:551.00px;font-size:21px;line-height:21px;color:#000;transform:scaleX(0.8514);transform-origin:0 0;-webkit-text-stroke:0.25px #000;">DP PRODUCTS PREDUZEĆE ZA POSLOVE U OBLASTI INFORMATIKE DRUŠTVO SA OGRANIČENOM</div>
<div class="t" style="left:650.00px;top:575.00px;font-size:21px;line-height:21px;color:#000;transform:scaleX(0.8372);transform-origin:0 0;-webkit-text-stroke:0.25px #000;">ODGOVORNOŠĆU BEOGRAD (VRAČAR)</div>
<div class="a" style="left:126px;top:614px;width:1394px;height:79px;background:#FFFFFF;"></div>
<div class="a" style="left:646px;top:614px;width:1px;height:79px;background:#EBEBEB;"></div>
<div class="t" style="left:157.00px;top:644.00px;font-size:21px;line-height:21px;color:#000;transform:scaleX(0.9419);transform-origin:0 0;-webkit-text-stroke:0.25px #000;">Poslovno Ime Latinica:</div>
<div class="t" style="left:649.00px;top:631.00px;font-size:21px;line-height:21px;color:#000;transform:scaleX(0.8514);transform-origin:0 0;-webkit-text-stroke:0.25px #000;">DP PRODUCTS PREDUZEĆE ZA POSLOVE U OBLASTI INFORMATIKE DRUŠTVO SA OGRANIČENOM</div>
<div class="t" style="left:650.00px;top:655.00px;font-size:21px;line-height:21px;color:#000;transform:scaleX(0.8372);transform-origin:0 0;-webkit-text-stroke:0.25px #000;">ODGOVORNOŠĆU BEOGRAD (VRAČAR)</div>
<div class="a" style="left:126px;top:730px;width:1394px;height:34px;background:#FFFFFF;"></div>
<div class="a" style="left:646px;top:730px;width:1px;height:34px;background:#EBEBEB;"></div>
<div class="t" style="left:157.00px;top:737.00px;font-size:21px;line-height:21px;color:#000;transform:scaleX(0.9226);transform-origin:0 0;-webkit-text-stroke:0.25px #000;">Skraćeno Poslovno Ime:</div>
<div class="t" style="left:649.30px;top:737.00px;font-size:21px;line-height:21px;color:#000;transform:scaleX(0.8476);transform-origin:0 0;-webkit-text-stroke:0.25px #000;">DP PRODUCTS DOO BEOGRAD</div>
<div class="a" style="left:126px;top:765px;width:1394px;height:35px;background:#FFFFFF;"></div>
<div class="a" style="left:646px;top:765px;width:1px;height:35px;background:#EBEBEB;"></div>
<div class="t" style="left:157.00px;top:773.00px;font-size:21px;line-height:21px;color:#000;transform:scaleX(0.9352);transform-origin:0 0;-webkit-text-stroke:0.25px #000;">Skraćeno Poslovno Ime Latinica:</div>
<div class="t" style="left:649.30px;top:773.00px;font-size:21px;line-height:21px;color:#000;transform:scaleX(0.8476);transform-origin:0 0;-webkit-text-stroke:0.25px #000;">DP PRODUCTS DOO BEOGRAD</div>
<div class="a" style="left:126px;top:837px;width:1394px;height:35px;background:#FFFFFF;"></div>
<div class="a" style="left:646px;top:837px;width:1px;height:35px;background:#EBEBEB;"></div>
<div class="t" style="left:157.00px;top:845.00px;font-size:21px;line-height:21px;color:#000;transform:scaleX(0.9255);transform-origin:0 0;-webkit-text-stroke:0.25px #000;">Naziv:</div>
<div class="t" style="left:649.30px;top:845.00px;font-size:21px;line-height:21px;color:#000;transform:scaleX(0.8473);transform-origin:0 0;-webkit-text-stroke:0.25px #000;">DP PRODUCTS</div>
<div class="a" style="left:126px;top:613px;width:1394px;height:1px;background:#EBEBEB;"></div>
<div class="a" style="left:126px;top:764px;width:1394px;height:1px;background:#EBEBEB;"></div>
<div class="t" style="left:97.00px;top:45.00px;font-size:22px;line-height:22px;color:#000;transform:scaleX(0.8749);transform-origin:0 0;-webkit-text-stroke:0.25px #000;">TEST BAZA DOO</div>
<div class="t" style="left:97.00px;top:70.00px;font-size:22px;line-height:22px;color:#000;transform:scaleX(0.8407);transform-origin:0 0;-webkit-text-stroke:0.25px #000;">BEOGRAD</div>
<div class="t" style="left:1269.50px;top:57.00px;font-size:22px;line-height:22px;color:#000;transform:scaleX(0.9453);transform-origin:0 0;-webkit-text-stroke:0.25px #000;">Datum štampe:</div>
<div class="t" style="left:1420.00px;top:57.00px;font-size:22px;line-height:22px;color:#000;transform:scaleX(0.8991);transform-origin:0 0;-webkit-text-stroke:0.25px #000;">13.08.2024</div>
<div class="t" style="left:371.00px;top:103.00px;font-size:32.7px;line-height:32.7px;color:#000;font-weight:bold;transform:scaleX(1.0490);transform-origin:0 0;-webkit-text-stroke:0.55px #000;">Informacije o partneru</div>
<div class="t" style="left:742.50px;top:103.00px;font-size:32.7px;line-height:32.7px;color:#000;font-weight:bold;-webkit-text-stroke:0.55px #000;">-</div>
<div class="t" style="left:765.50px;top:103.00px;font-size:32.7px;line-height:32.7px;color:#000;font-weight:bold;transform:scaleX(0.9666);transform-origin:0 0;-webkit-text-stroke:0.55px #000;">DP PRODUCTS DOO BEOGRAD</div>
<div class="a" style="left:0px;top:35px;width:1616px;height:1px;background:repeating-linear-gradient(90deg,#000 0 3px,transparent 3px 6px);background-position:0 0;"></div>
<div class="a" style="left:0px;top:95px;width:1616px;height:1px;background:repeating-linear-gradient(90deg,#000 0 3px,transparent 3px 6px);background-position:0 0;"></div>
<div class="a" style="left:95px;top:0px;width:1px;height:866px;background:repeating-linear-gradient(180deg,#000 0 3px,transparent 3px 6px);background-position:0 0;"></div>
<div class="a" style="left:1520px;top:0px;width:1px;height:866px;background:repeating-linear-gradient(180deg,#000 0 3px,transparent 3px 6px);background-position:0 0;"></div>
</div>
<div class="a" style="left:0px;top:1008px;width:1919px;height:31px;background:#2B579A;"></div>
<div class="a" style="left:1671px;top:1011px;width:71px;height:25px;border:1.5px solid #FFFFFF;"></div>
<div class="t" style="left:1690.00px;top:1019.00px;font-size:11.5px;line-height:11.5px;color:#FFFFFF;transform:scaleX(1.0888);transform-origin:0 0;">T R X</div>
<div class="a" style="left:1746px;top:1010px;width:2px;height:27px;border-left:1px solid #234A84;border-right:1px solid #3260A5;"></div>
<div class="a" style="left:1774px;top:1010px;width:2px;height:27px;border-left:1px solid #234A84;border-right:1px solid #3260A5;"></div>
<div class="a" style="left:1813px;top:1010px;width:2px;height:27px;border-left:1px solid #234A84;border-right:1px solid #3260A5;"></div>
<div class="a" style="left:1847px;top:1010px;width:2px;height:27px;border-left:1px solid #234A84;border-right:1px solid #3260A5;"></div>
<div class="a" style="left:1885px;top:1010px;width:2px;height:27px;border-left:1px solid #234A84;border-right:1px solid #3260A5;"></div>
<div class="t" style="left:1779.50px;top:1019.00px;font-size:11.5px;line-height:11.5px;color:#9AA7BB;transform:scaleX(0.9420);transform-origin:0 0;">CAPS</div>
<div class="t" style="left:1818.00px;top:1019.00px;font-size:11.5px;line-height:11.5px;color:#9AA7BB;transform:scaleX(0.9737);transform-origin:0 0;">NUM</div>
<div class="t" style="left:1852.00px;top:1019.00px;font-size:11.5px;line-height:11.5px;color:#9AA7BB;transform:scaleX(0.9780);transform-origin:0 0;">SCRL</div>
<div class="t" style="left:1893.00px;top:1019.00px;font-size:11.5px;line-height:11.5px;color:#9AA7BB;transform:scaleX(0.9389);transform-origin:0 0;">INS</div>
<div class="a" style="left:645px;top:55px;width:192px;height:99px;border:5px solid #EC1C24;"></div>
<div class="a" style="left:653px;top:91px;width:175px;height:54px;background:#FFFFFF;border:1px solid #ABABAB;box-shadow:3px 3px 4px rgba(0,0,0,0.25)"></div>
<svg class="a" style="left:659px;top:95px;" width="18" height="19" viewBox="0 0 18 19"><path d="M0.5 1.5H9L13.5 6V17.5H0.5Z" fill="#FFF" stroke="#6A6A6A" stroke-width="1.2"/><path d="M9 1.5V6H13.5Z" fill="#6A6A6A"/><rect x="3" y="8" width="14" height="6" fill="#E07050"/><text x="10" y="12.9" text-anchor="middle" font-family="Liberation Sans" font-weight="bold" font-size="5.5" fill="#fff" letter-spacing="0.5">PDF</text></svg>
<svg class="a" style="left:660px;top:122px;" width="18" height="17" viewBox="0 0 18 17"><rect x="0.6" y="0.6" width="13" height="15.3" rx="0.8" fill="#FFFFFF" stroke="#6F87C4" stroke-width="1.1"/><rect x="2.2" y="2.5" width="9.5" height="3" fill="#EEF1FA"/><rect x="2" y="6" width="15" height="8" rx="0.5" fill="#C8161E"/><text x="9.6" y="12.4" text-anchor="middle" font-family="Liberation Mono" font-weight="bold" font-size="7" fill="#fff" letter-spacing="0.2">PDF</text></svg>
<div class="t" style="left:689.00px;top:100.00px;font-size:12.7px;line-height:12.7px;color:#444444;transform:scaleX(1.0145);transform-origin:0 0;">Eksterni program</div>
<div class="t" style="left:689.00px;top:125.00px;font-size:12.7px;line-height:12.7px;color:#444444;transform:scaleX(1.0230);transform-origin:0 0;">Integrisana forma</div>
</body></html>
